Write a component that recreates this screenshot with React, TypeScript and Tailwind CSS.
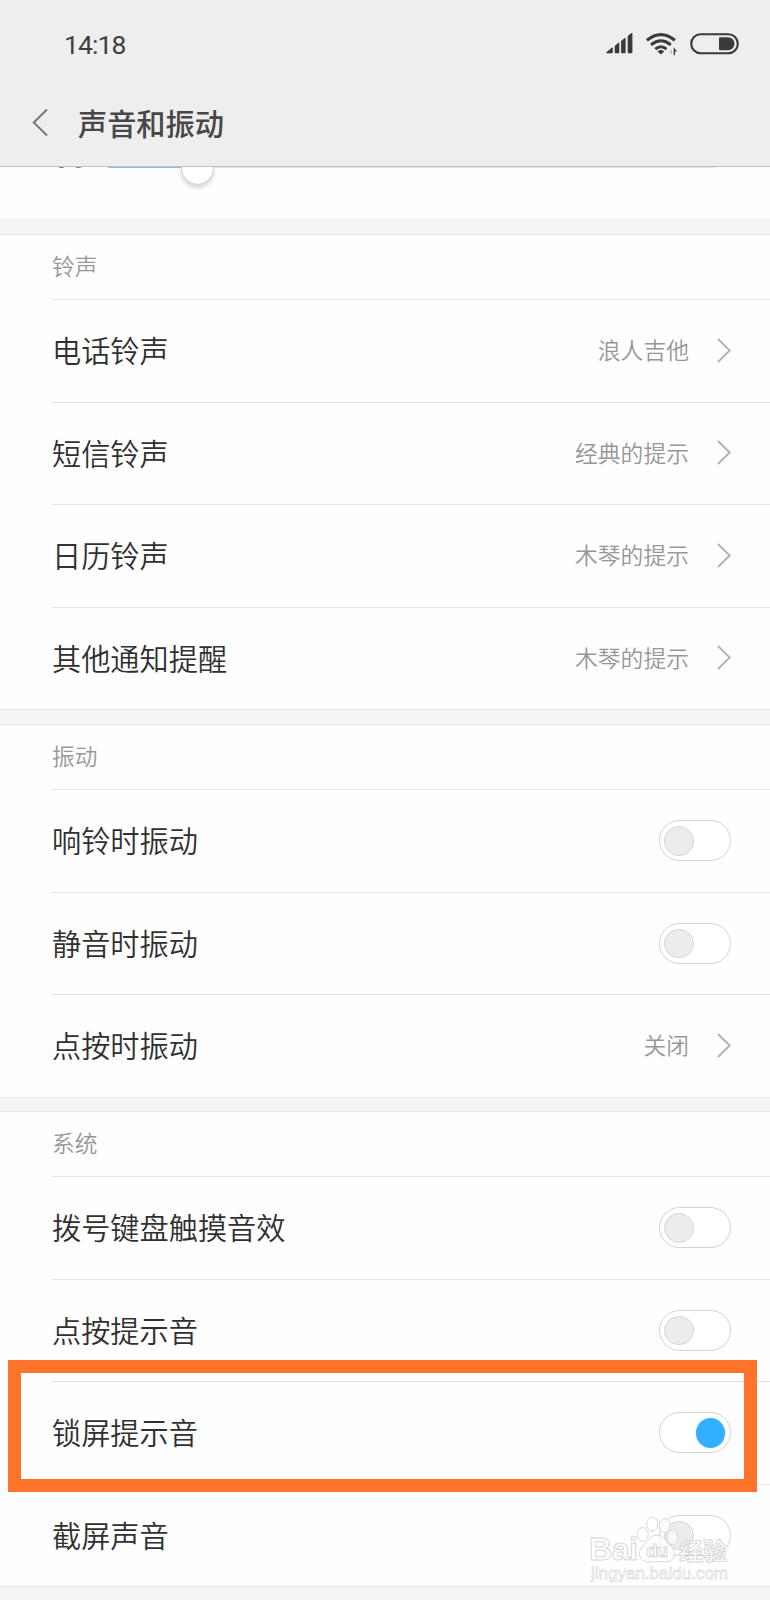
import clsx from "clsx";

type Item = {
  label: string;
  value?: string;
  on?: boolean;
  highlight?: boolean;
};

const ringtones: Item[] = [
  { label: "电话铃声", value: "浪人吉他" },
  { label: "短信铃声", value: "经典的提示" },
  { label: "日历铃声", value: "木琴的提示" },
  { label: "其他通知提醒", value: "木琴的提示" },
];

const vibration: Item[] = [
  { label: "响铃时振动", on: false },
  { label: "静音时振动", on: false },
  { label: "点按时振动", value: "关闭" },
];

const system: Item[] = [
  { label: "拨号键盘触摸音效", on: false },
  { label: "点按提示音", on: false },
  { label: "锁屏提示音", on: true, highlight: true },
  { label: "截屏声音", on: false },
];

const StatusIcons = () => (
  <div className="flex items-center">
    <svg width="28" height="24" viewBox="0 0 28 24" fill="#3a3a3a">
      <path d="M.4 20.2 6 15.600q.8-.5.8.4v4.300q0 .9-.9.9H.7q-.9 0-.3-1z" />
      <path d="M9.200 13.400l3.300-2.600q.8-.6.8.4v9.100q0 .9-.9.9H9.600q-.9 0-.9-.9v-6q0-.6.500-.9z" />
      <path d="M15.600 8.500l3.200-2.500q.8-.6.8.4v13.900q0 .9-.9.9H16q-.9 0-.9-.9V9.400q0-.6.500-.9z" />
      <path d="M22.200 3.600l3.300-2.600q.9-.6.9.4v18.900q0 .9-.9.900h-2.900q-.9 0-.9-.9V4.500q0-.6.500-.9z" />
    </svg>
    <svg className="ml-3" width="32" height="24" viewBox="0 0 32 24" fill="none" stroke="#3a3a3a">
      <path d="M.9 8.300q14-11.400 28 0" strokeWidth="3.200" />
      <path d="M5 12.900q9.900-8.200 19.800 0" strokeWidth="3" />
      <path d="M9.300 17.200q5.600-4.800 11.200 0" strokeWidth="3" />
      <path d="M11.600 19.500q3.300-2.800 6.600 0L14.900 22.600z" fill="#3a3a3a" stroke="none" />
      <path d="M25.500 22v-4l-2 2.500" stroke="#bbb" strokeWidth="1" />
      <path d="M28.300 23.200v-6l2 2.500" strokeWidth="1.300" />
    </svg>
    <svg className="ml-3" width="50" height="22" viewBox="0 0 50 22">
      <rect x="1.200" y="1.200" width="46.600" height="19" rx="9.500" fill="none" stroke="#3a3a3a" strokeWidth="2.100" />
      <path d="M30.200 4.200H38a6.500 6.500 0 0 1 0 13h-7.800q-1.200 0-1.200-1.200V5.400q0-1.200 1.200-1.200z" fill="#3a3a3a" />
    </svg>
  </div>
);

const Chevron = () => (
  <svg className="ml-7 shrink-0" width="14" height="26" viewBox="0 0 14 26" fill="none" stroke="#b0b0b0" strokeWidth="1.800">
    <path d="M1 1 12.700 12.500 1 24" />
  </svg>
);

const Toggle = ({ on }: { on?: boolean }) => (
  <div
    className={clsx(
      "flex h-[41px] w-[72px] items-center rounded-full border border-[#d2d2d2] bg-white",
      on ? "justify-end pr-[5px]" : "pl-1"
    )}
  >
    <div
      className={clsx(
        "h-[29.500px] w-[29.500px] rounded-full",
        on ? "bg-[#32b0ff]" : "border border-[#d6d6d6] bg-[#ececec]"
      )}
    />
  </div>
);

const Row = ({ item, last }: { item: Item; last: boolean }) => (
  <div className={clsx("relative h-[102.5px]", last ? "border-b border-[#e6e6e6]" : "pl-[52px]")}>
    <div
      className={clsx(
        "flex h-full items-center pr-[39px]",
        last ? "pl-[52px]" : "border-b border-[#e2e2e2]"
      )}
    >
      <span className="flex-1 pb-0.5 text-[29.200px] leading-none font-[350] text-[#303030]">{item.label}</span>
      {item.value ? (
        <>
          <span className="text-[22.800px] leading-none font-[350] text-[#979797]">{item.value}</span>
          <Chevron />
        </>
      ) : (
        <Toggle on={item.on} />
      )}
    </div>
    {item.highlight && (
      <div className="absolute top-[-22px] left-2 h-[132px] w-[749px] border-[13px] border-[#ff742a]" />
    )}
  </div>
);

const Section = ({ title, items }: { title: string; items: Item[] }) => (
  <section className="border-t border-[#e6e6e6] bg-[#fefefe]">
    <div className="pl-[52px]">
      <h2 className="flex h-[65.500px] items-center border-b border-[#e4e4e4] text-[22.700px] leading-none font-[350] text-[#979797]">
        {title}
      </h2>
    </div>
    {items.map((item, i) => (
      <Row key={item.label} item={item} last={i === items.length - 1} />
    ))}
  </section>
);

// Sits on top of the last row, bottom right
const Watermark = () => (
  <svg
    className="absolute top-[1510px] left-[584px]"
    width="150"
    height="80"
    viewBox="0 0 150 80"
    fill="#fff"
    fillOpacity="0.65"
    stroke="#d8d8d8"
    strokeWidth="1"
  >
    <g fontFamily="'Liberation Sans', 'Noto Sans CJK SC', sans-serif" fontWeight="700">
      <text x="5" y="50" fontSize="32" textLength="49">Bai</text>
      <ellipse cx="58.700" cy="24.500" rx="5.500" ry="7" />
      <ellipse cx="68.300" cy="14" rx="5.500" ry="7" />
      <ellipse cx="80.700" cy="15.500" rx="5.500" ry="7" />
      <ellipse cx="88.300" cy="27.500" rx="5.500" ry="7" />
      <path d="M73 25c-6 0-8 5-12 9-6 5-7 10-4 14.500 4 5 10 3 16 3s12 2 16-3c3-4.500 2-9.500-4-14.500-4-4-6-9-12-9z" />
      <text x="62" y="47" fontSize="19" textLength="22">du</text>
      <text x="95" y="50" fontSize="24" textLength="48">经验</text>
    </g>
    <text
      x="7"
      y="69"
      fontSize="17"
      textLength="137"
      lengthAdjust="spacingAndGlyphs"
      stroke="#dedede"
      strokeWidth="0.8"
      fontFamily="'Liberation Sans', sans-serif"
    >
      jingyan.baidu.com
    </text>
  </svg>
);

export default function App() {
  return (
    <div className="relative h-[1600px] w-[770px] overflow-hidden bg-[#f5f5f5] font-['Noto_Sans_CJK_SC',sans-serif]">
      <header className="h-[167px] border-b border-[#bfbfbf] bg-[#eee]">
        <div className="flex h-[88px] items-center justify-between pr-[30px] pl-16">
          <span className="pt-0.5 font-['Roboto',sans-serif] text-[26.500px] leading-none tracking-[-0.9px] text-[#3f3f3f]">
            14:18
          </span>
          <StatusIcons />
        </div>
        <div className="flex h-[70px] items-center pl-8">
          <svg width="16" height="28" viewBox="0 0 16 28" fill="none" stroke="#777" strokeWidth="2">
            <path d="M15 .5 1.800 13.500 15 26.500" />
          </svg>
          <h1 className="ml-[30px] text-[29.200px] leading-none font-medium text-[#474747]">声音和振动</h1>
        </div>
      </header>

      {/* volume slider, mostly scrolled under the header */}
      <div className="relative h-[51px] overflow-hidden bg-[#fefefe]">
        <div className="flex h-px pl-[108px]">
          <div className="w-[74px] bg-[#8fc3d4]" />
          <div className="w-[533px] bg-[#e4e4e4]" />
        </div>
        <svg className="absolute top-0 left-[57px]" width="28" height="2" fill="#777">
          <path d="M1 0h7q-3.500 2-7 0zM18 0h7q-3.500 2-7 0z" />
        </svg>
        <div className="absolute top-[-15px] left-[181px] h-[33px] w-[33px] rounded-full border border-[#cfcfcf] bg-white shadow-[0_3px_4px_rgba(0,0,0,0.15)]" />
      </div>

      <div className="mt-[15.500px]">
        <Section title="铃声" items={ringtones} />
      </div>
      <div className="mt-[13.500px]">
        <Section title="振动" items={vibration} />
      </div>
      <div className="mt-[13px]">
        <Section title="系统" items={system} />
      </div>

      <Watermark />
    </div>
  );
}
